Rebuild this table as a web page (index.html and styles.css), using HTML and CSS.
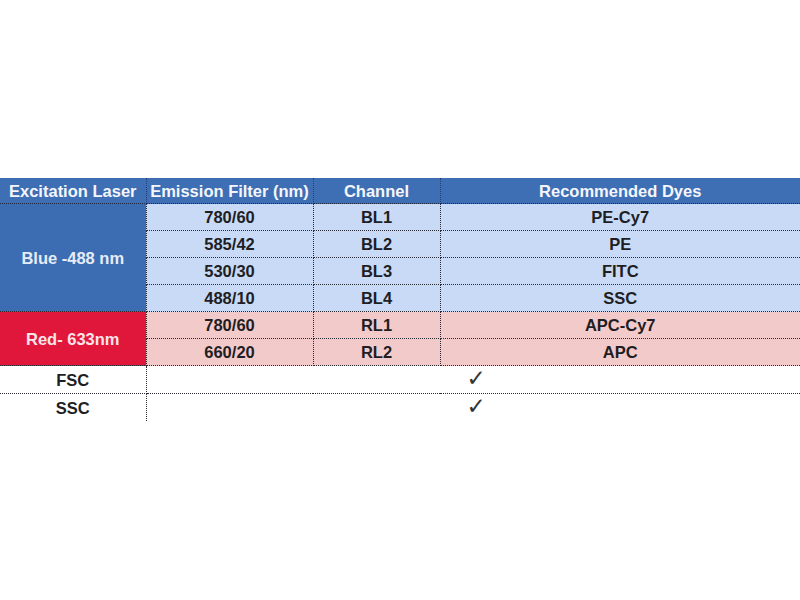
FILE: index.html
```html
<!DOCTYPE html>
<html>
<head>
<meta charset="utf-8">
<link rel="stylesheet" href="styles.css">
</head>
<body>
<div class="page">
<table class="dyes">
  <colgroup>
    <col class="c1"><col class="c2"><col class="c3"><col class="c4">
  </colgroup>
  <thead>
    <tr class="head">
      <th>Excitation Laser</th>
      <th>Emission Filter (nm)</th>
      <th>Channel</th>
      <th>Recommended Dyes</th>
    </tr>
  </thead>
  <tbody>
    <tr class="blue">
      <td class="laser laser-blue" rowspan="4">Blue -488 nm</td>
      <td>780/60</td><td>BL1</td><td>PE-Cy7</td>
    </tr>
    <tr class="blue"><td>585/42</td><td>BL2</td><td>PE</td></tr>
    <tr class="blue"><td>530/30</td><td>BL3</td><td>FITC</td></tr>
    <tr class="blue"><td>488/10</td><td>BL4</td><td>SSC</td></tr>
    <tr class="red">
      <td class="laser laser-red" rowspan="2">Red- 633nm</td>
      <td>780/60</td><td>RL1</td><td>APC-Cy7</td>
    </tr>
    <tr class="red"><td>660/20</td><td>RL2</td><td>APC</td></tr>
    <tr class="plain"><td class="name">FSC</td><td class="check" colspan="3"><span class="mark">✓</span></td></tr>
    <tr class="plain last"><td class="name">SSC</td><td class="check" colspan="3"><span class="mark">✓</span></td></tr>
  </tbody>
</table>
</div>
</body>
</html>
```

FILE: styles.css
```css
html, body {
  margin: 0;
  padding: 0;
  background: #ffffff;
}
.page {
  padding-top: 178px;
}
.dyes {
  width: 800px;
  border-collapse: collapse;
  table-layout: fixed;
  font-family: "Liberation Sans", Arial, sans-serif;
  font-weight: bold;
  font-size: 16.5px;
  line-height: 18px;
  color: #1e1e24;
}
.c1 { width: 146px; }
.c2 { width: 167px; }
.c3 { width: 127px; }
.c4 { width: 360px; }
.dyes th,
.dyes td {
  padding: 0;
  text-align: center;
  vertical-align: middle;
  border: 1px dotted #2a2a33;
}
.dyes tr > :first-child { border-left: none; }
.dyes tr > :last-child { border-right: none; }
.head th {
  height: 25px;
  background: #3e6eb4;
  color: #f4f6fb;
  border-top: none;
  border-left-color: #1f3f78;
  border-right-color: #1f3f78;
  border-bottom-color: #1e2a44;
}
.blue td { background: #c8daf6; height: 26px; }
.red td { background: #f3caca; height: 26px; }
.laser-blue { background: #3c6db3 !important; color: #e6ecf6; }
.laser-red { background: #e0173b !important; color: #fbe4e8; }
.plain td { background: #ffffff; height: 27px; }
.plain td.check {
  border-right: none;
  padding-left: 6px;
  font-family: "DejaVu Sans", sans-serif;
  font-weight: normal;
  font-size: 23px;
  line-height: 20px;
  color: #333;
}
.mark {
  display: inline-block;
  position: relative;
  top: -2px;
}
.last td { border-bottom: none; }
```
